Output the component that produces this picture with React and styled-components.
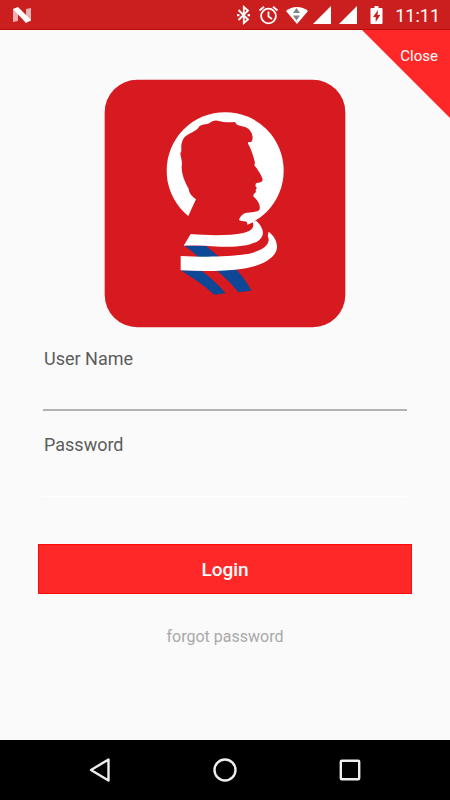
import styled, { createGlobalStyle } from "styled-components";
import { useState } from "react";

const GlobalStyle = createGlobalStyle`
  * {
    box-sizing: border-box;
  }
  body {
    margin: 0;
    background: #fafafa;
    font-family: Roboto, "Liberation Sans", sans-serif;
  }
`;
const Screen = styled.div`
  display: flex;
  flex-direction: column;
  min-height: 100vh;
`;
const StatusBar = styled.header`
  display: flex;
  align-items: center;
  justify-content: space-between;
  height: 30px;
  padding: 0 10px 0 12px;
  background: #cb1e1e;
  border-bottom: 1px solid #bd0b0b;
  color: #fff;
`;
const StatusIcons = styled.div`
  display: flex;
  align-items: center;
  gap: 4px;
`;
const Icon = styled.svg`
  display: block;
  flex: none;
  width: ${(props) => props.$width}px;
  height: ${(props) => props.$height}px;
`;
const Time = styled.time`
  font-size: 18px;
  line-height: 24px;
  padding-top: 2px;
`;
const Main = styled.main`
  position: relative;
  display: flex;
  flex: 1;
  flex-direction: column;
  align-items: center;
  padding: 49px 38px 24px;
`;
const CloseButton = styled.button`
  position: absolute;
  top: 0;
  right: 0;
  width: 88px;
  height: 88px;
  padding: 16px 12px 0 0;
  border: none;
  background: #ff2828;
  clip-path: polygon(0 0, 100% 0, 100% 100%);
  color: #fff;
  font-family: inherit;
  font-size: 15px;
  line-height: 20px;
  text-align: right;
  display: flex;
  justify-content: flex-end;
  align-items: flex-start;
  cursor: pointer;
`;
const Form = styled.form`
  display: flex;
  flex-direction: column;
  width: 100%;
  margin-top: 19px;
`;
const Field = styled.div`
  display: flex;
  flex-direction: column;
  margin: 0 5px 22px;
`;
const Label = styled.label`
  padding-left: 1px;
  color: #5c5c5c;
  font-size: 18px;
  line-height: 24px;
`;
const Input = styled.input`
  height: 40px;
  padding: 0 1px;
  border: none;
  border-bottom: ${(props) =>
    props.$active ? "2px solid #b3b3b3" : "1px solid #fff"};
  border-radius: 0;
  outline: none;
  background: transparent;
  color: #333;
  font-family: inherit;
  font-size: 18px;
`;
const LoginButton = styled.button`
  height: 50px;
  margin-top: 25px;
  border: 1px solid #ff0a0a;
  background: #ff2828;
  color: #fff;
  font-family: inherit;
  font-size: 19px;
  font-weight: 500;
  cursor: pointer;
`;
const ForgotLink = styled.a`
  margin-top: 31px;
  color: #a9a9a9;
  font-size: 16px;
  line-height: 24px;
  text-decoration: none;
`;
const NavBar = styled.nav`
  display: flex;
  align-items: center;
  justify-content: space-around;
  height: 60px;
  padding: 0 37px;
  background: #000;
`;
const NavButton = styled.button`
  display: flex;
  align-items: center;
  justify-content: center;
  width: 48px;
  height: 48px;
  padding: 0;
  border: none;
  background: transparent;
  cursor: pointer;
`;

function Logo() {
  return (
    <Icon $width={242} $height={249} viewBox="0 0 726 747" aria-hidden="true">
      <rect x="2" y="2" width="722" height="743" rx="98" fill="#d71920" />
      <g transform="translate(153 63)">
        <circle cx="210.5" cy="212" r="175.5" fill="#fff" />
        <path
          fill="#d71920"
          d="M100 348L108 330L123 298C112 288 103 283 101 266C90 246 80 225 80 200C83 180 77 176 76 160C81 152 78 145 79 135C82 120 86 112 96 106C108 98 126 92 131 82C136 70 155 76 165 68C175 60 185 60 195 64C210 69 225 66 240 66C246 79 258 76 272 82C285 88 292 100 293 112C293 122 290 128 284 126C278 126 277 130 281 134C290 150 297 175 300 188C298 193 297 198 302 200C310 212 322 228 323 240C320 250 308 247 303 250C300 256 302 262 306 264C302 268 300 272 304 276C296 280 292 288 298 292C308 302 317 315 314 328C308 338 292 335 276 338C262 340 255 350 252 360C260 366 272 361 276 367L278 376L297 366L310 380L300 400L90 400Z"
        />
      </g>
      <g transform="translate(198 378)">
        <path
          fill="#0f4797"
          d="M42 122L107 122C122 134 136 144 150 160L84 157C72 142 58 132 42 122ZM32 196L92 196C120 216 146 240 167 265L133 269C102 242 68 218 32 196ZM138 195L196 190C214 210 231 232 244 257L205 262C184 236 162 214 138 195Z"
        />
        <path
          fill="#fff"
          d="M62 87C120 92 180 92 220 84C246 78 254 66 248 51L258 47C274 60 283 80 277 92C267 118 220 128 150 125C110 123 75 121 41 122Z"
        />
        <path
          fill="#fff"
          d="M32 153C90 156 170 157 226 148C276 139 306 120 293 92L296 80C314 94 322 112 321 128C316 166 260 188 196 194C140 199 85 198 32 196Z"
        />
      </g>
    </Icon>
  );
}

function App() {
  const [userName, setUserName] = useState("");
  const [password, setPassword] = useState("");
  const [active, setActive] = useState("userName");

  function handleSubmit(e) {
    e.preventDefault();
  }

  return (
    <Screen>
      <GlobalStyle />
      <StatusBar>
        <Icon $width={20} $height={18} viewBox="0 0 20 18" aria-hidden="true">
          <path
            fill="#fff"
            fillOpacity=".65"
            d="M1 3L6 2V15L1 16ZM14 3L19 2V15L14 16Z"
          />
          <path fill="#fff" d="M1 3L6 1L19 14L14 17Z" />
        </Icon>
        <StatusIcons>
          <Icon $width={18} $height={20} viewBox="0 0 18 20">
            <path
              fill="none"
              stroke="#fff"
              strokeWidth="1.8"
              d="M3.5 5L13 14.5L8.8 18V2L13 5.5L3.5 15"
            />
            <path fill="#fff" d="M2 9h2.4v2.2H2zM12.6 9h2.4v2.2h-2.4z" />
          </Icon>
          <Icon $width={24} $height={20} viewBox="0 0 24 20">
            <g fill="none" stroke="#fff" strokeWidth="1.8">
              <circle cx="11.5" cy="11" r="7.4" />
              <path d="M11.5 6.5V11.5L15 14M2.5 5.5L7 1.8M16 1.8L20.5 5.5" />
            </g>
          </Icon>
          <Icon $width={24} $height={20} viewBox="0 0 24 20">
            <path fill="#fff" d="M1 6C7 .8 17 .8 23 6L12 19Z" />
            <path fill="#858585" d="M8 8L11.5 3L15 8ZM8 10.5H15L11.5 15.5Z" />
          </Icon>
          <Icon $width={22} $height={20} viewBox="0 0 22 20">
            <path fill="#fff" d="M0 19L18 1V19Z" />
          </Icon>
          <Icon $width={22} $height={20} viewBox="0 0 22 20">
            <path fill="#fff" d="M0 19L18 1V19Z" />
          </Icon>
          <Icon $width={26} $height={20} viewBox="0 0 26 20">
            <path
              fill="#fff"
              d="M9.5 1H13.5V3H16.5C17.1 3 17.5 3.4 17.5 4V18C17.5 18.6 17.1 19 16.5 19H6.5C5.9 19 5.5 18.6 5.5 18V4C5.5 3.4 5.9 3 6.5 3H9.5Z"
            />
            <path fill="#cb1e1e" d="M13 5L8 12H10.7V17L15.3 10H12.5Z" />
          </Icon>
          <Time>11:11</Time>
        </StatusIcons>
      </StatusBar>
      <Main>
        <CloseButton type="button">Close</CloseButton>
        <Logo />
        <Form onSubmit={(e) => handleSubmit(e)}>
          <Field>
            <Label htmlFor="userName">User Name</Label>
            <Input
              id="userName"
              type="text"
              value={userName}
              $active={active === "userName"}
              onFocus={() => setActive("userName")}
              onChange={(e) => setUserName(e.target.value)}
            />
          </Field>
          <Field>
            <Label htmlFor="password">Password</Label>
            <Input
              id="password"
              type="password"
              value={password}
              $active={active === "password"}
              onFocus={() => setActive("password")}
              onChange={(e) => setPassword(e.target.value)}
            />
          </Field>
          <LoginButton type="submit">Login</LoginButton>
        </Form>
        <ForgotLink href="#forgot">forgot password</ForgotLink>
      </Main>
      <NavBar>
        <NavButton type="button" aria-label="Back">
          <Icon $width={24} $height={26} viewBox="0 0 24 26">
            <path
              fill="none"
              stroke="#eee"
              strokeWidth="2.4"
              strokeLinejoin="round"
              d="M3 13L20.5 2.5V23.5Z"
            />
          </Icon>
        </NavButton>
        <NavButton type="button" aria-label="Home">
          <Icon $width={26} $height={26} viewBox="0 0 26 26">
            <circle
              cx="13"
              cy="13"
              r="10.5"
              fill="none"
              stroke="#eee"
              strokeWidth="2.4"
            />
          </Icon>
        </NavButton>
        <NavButton type="button" aria-label="Recent apps">
          <Icon $width={24} $height={24} viewBox="0 0 24 24">
            <rect
              x="2.8"
              y="2.8"
              width="18.4"
              height="18.4"
              rx="1"
              fill="none"
              stroke="#eee"
              strokeWidth="2.4"
            />
          </Icon>
        </NavButton>
      </NavBar>
    </Screen>
  );
}

export default App;
